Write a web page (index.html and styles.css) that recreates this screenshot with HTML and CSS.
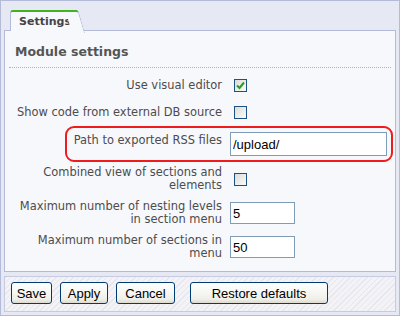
FILE: index.html
```html
<!DOCTYPE html>
<html lang="en">
<head>
  <meta charset="UTF-8" />
  <title>Module settings</title>
  <link rel="stylesheet" href="styles.css">
</head>
<body>
  <div class="frame">
    <div class="tabs">
      <div class="tab">Settings</div>
    </div>

    <div class="panel">
      <h2>Module settings</h2>
      <table class="options">
        <tr>
          <td class="label">Use visual editor</td>
          <td class="value">
            <span class="check checked">
              <svg width="9" height="9" viewBox="0 0 9 9"><path d="M1 4.5 L3.5 7 L8 1.5" fill="none" stroke="#21a121" stroke-width="2"/></svg>
            </span>
          </td>
        </tr>
        <tr>
          <td class="label">Show code from external DB source</td>
          <td class="value"><span class="check"></span></td>
        </tr>
        <tr class="marked">
          <td class="label">Path to exported RSS files</td>
          <td class="value"><input type="text" class="field wide" value="/upload/"></td>
        </tr>
        <tr>
          <td class="label">Combined view of sections and elements</td>
          <td class="value"><span class="check"></span></td>
        </tr>
        <tr>
          <td class="label">Maximum number of nesting levels in section menu</td>
          <td class="value"><input type="text" class="field short" value="5"></td>
        </tr>
        <tr>
          <td class="label">Maximum number of sections in menu</td>
          <td class="value"><input type="text" class="field short" value="50"></td>
        </tr>
      </table>
    </div>

    <div class="buttons">
      <button class="save">Save</button>
      <button class="apply">Apply</button>
      <button class="cancel">Cancel</button>
      <button class="restore">Restore defaults</button>
    </div>
  </div>
</body>
</html>
```

FILE: styles.css
```css
/* Base */
body {
  margin: 0;
  font-family: 'DejaVu Sans', Verdana, sans-serif;
  font-size: 11.44px;
  color: #4c4c4c;
}

.frame {
  box-sizing: border-box;
  width: 400px;
  height: 316px;
  padding: 0 3px 3px 3px;
  background-color: #e6e8f4;
  border: 1px solid #b3bbd9;
}

/* Tab strip */
.tabs {
  height: 29px;
  padding-left: 6px;
  display: flex;
  align-items: flex-end;
}

.tab {
  position: relative;
  height: 19px;
  width: 58px;
  margin-bottom: -1px;
  padding: 0 0 0 8px;
  background-color: #f7f8fc;
  border-top: 2px solid #3fb41e;
  border-left: 1px solid #b3bbd9;
  border-top-left-radius: 3px;
  font-weight: bold;
  font-size: 11px;
  line-height: 19px;
  color: #444;
  z-index: 1;
}

.tab::after {
  content: '';
  position: absolute;
  top: -2px;
  right: -8px;
  width: 12px;
  height: 21px;
  background-color: #f7f8fc;
  border-top: 2px solid #3fb41e;
  border-right: 1px solid #b3bbd9;
  border-top-right-radius: 3px;
  transform: skewX(16deg);
  transform-origin: bottom left;
}

/* Panel */
.panel {
  box-sizing: border-box;
  height: 242px;
  background-color: #f7f8fc;
  border: 1px solid #b3bbd9;
  padding: 0 4px;
}

.panel h2 {
  margin: 0;
  padding: 13px 6px 8px;
  font-size: 12.5px;
  color: #555;
  border-bottom: 1px dotted #b0b0b8;
}

.options {
  width: 100%;
  border-collapse: collapse;
  margin-top: 4px;
}

.options td {
  padding: 4px 0;
  vertical-align: middle;
  line-height: 13px;
}

.options .label {
  width: 210px;
  padding-left: 3px;
  padding-right: 8px;
  text-align: right;
}

.options .value {
  padding-left: 0;
}

/* highlight around one option */
.marked td {
  padding-top: 6px;
  padding-bottom: 6px;
}

.marked .label {
  position: relative;
  vertical-align: top;
  padding-top: 8px;
}

.marked .label::before {
  content: '';
  position: absolute;
  left: 56px;
  top: 0;
  width: 324px;
  height: 32px;
  border: 2px solid #ee1c1c;
  border-radius: 9px;
}

/* Checkboxes */
.check {
  display: inline-block;
  box-sizing: border-box;
  width: 13px;
  height: 13px;
  margin: 3px 0 3px 4px;
  border: 1px solid #1c5180;
  background: linear-gradient(135deg, #dcdcd7, #fbfbf9);
  vertical-align: middle;
}

.check svg {
  display: block;
  margin: 1px;
}

/* Text fields */
.field {
  box-sizing: border-box;
  height: 22px;
  padding: 2px 2px;
  border: 1px solid #7f9db9;
  background-color: #fff;
  font-family: 'Liberation Sans', Arial, sans-serif;
  font-size: 13px;
  color: #000;
  vertical-align: middle;
}

.field.wide {
  width: 157px;
  height: 24px;
}

.field.short {
  width: 65px;
}

/* Button bar */
.buttons {
  box-sizing: border-box;
  height: 36px;
  margin-top: 4px;
  padding: 5px 6px;
  display: flex;
  gap: 8px;
  border: 1px solid #c6cbe0;
  background: repeating-linear-gradient(-45deg, #f3f3f7 0, #f3f3f7 3px, #e6e6ec 3px, #e6e6ec 4px);
}

.buttons button {
  height: 22px;
  padding: 0;
  font-family: 'Liberation Sans', Arial, sans-serif;
  font-size: 13px;
  color: #000;
  border: 1px solid #003c74;
  border-radius: 3px;
  background: linear-gradient(#ffffff, #f0f0ea 80%, #dcdad0);
}

.buttons .save {
  width: 41px;
}

.buttons .apply {
  width: 48px;
}

.buttons .cancel {
  width: 59px;
}

.buttons .restore {
  width: 138px;
  margin-left: 7px;
}
```
